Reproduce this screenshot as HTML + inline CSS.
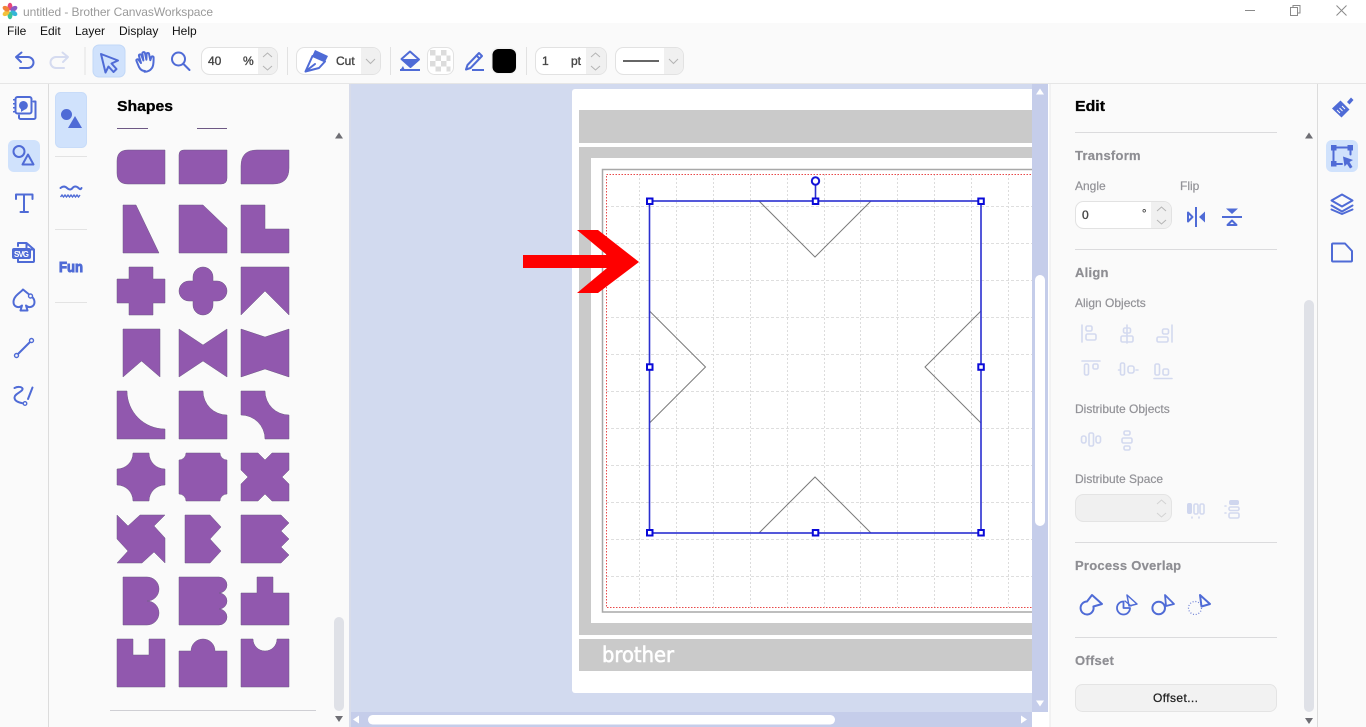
<!DOCTYPE html>
<html><head><meta charset="utf-8"><title>untitled - Brother CanvasWorkspace</title>
<style>
html,body{margin:0;padding:0;width:1366px;height:727px;overflow:hidden;background:#fafafa}
svg{display:block;font-family:"Liberation Sans",sans-serif}
.s path,.s polygon{fill:#9158ae;stroke:#6d5884;stroke-width:.5}
.i{fill:none;stroke:#4f6bd6;stroke-width:2;stroke-linecap:round;stroke-linejoin:round}
.f{fill:#4f6bd6;stroke:none}
.d{fill:none;stroke:#d3d9ef;stroke-width:1.6;stroke-linecap:round;stroke-linejoin:round}
.l{font-size:12px;fill:#929297;stroke:#929297;stroke-width:.2}
.h{font-size:13px;font-weight:bold;fill:#8e8e93;stroke:#8e8e93;stroke-width:.2;letter-spacing:.25px}
.v{font-size:12px;fill:#444;stroke:#444;stroke-width:.35}
.c{fill:none;stroke:#b4b4b4;stroke-width:1}
</style></head><body>
<svg width="1366" height="727" viewBox="0 0 1366 727" xmlns="http://www.w3.org/2000/svg">
<rect width="1366" height="727" fill="#fafafa"/>
<!-- title bar -->
<rect width="1366" height="23" fill="#fff"/>
<g transform="translate(10,11)">
<ellipse cx="0" cy="-4.500" rx="2.400" ry="3.800" fill="#e8467c"/>
<ellipse cx="0" cy="-4.500" rx="2.400" ry="3.800" fill="#8a5cc6" transform="rotate(60)"/>
<ellipse cx="0" cy="-4.500" rx="2.400" ry="3.800" fill="#35b6d8" transform="rotate(120)"/>
<ellipse cx="0" cy="-4.500" rx="2.400" ry="3.800" fill="#3cc39a" transform="rotate(180)"/>
<ellipse cx="0" cy="-4.500" rx="2.400" ry="3.800" fill="#f3c13a" transform="rotate(240)"/>
<ellipse cx="0" cy="-4.500" rx="2.400" ry="3.800" fill="#f2843a" transform="rotate(300)"/>
</g>
<text x="23" y="16" font-size="12" fill="#9a9a9a" textLength="190">untitled - Brother CanvasWorkspace</text>
<path d="M1245 10.500H1255" stroke="#8a8a8a" stroke-width="1"/>
<path d="M1290.500 7.500h7v8h-7zM1293 7.500V5.500h7v7.500h-2" fill="none" stroke="#8a8a8a"/>
<path d="M1336.500 5.500l10 10M1346.500 5.500l-10 10" stroke="#8a8a8a" stroke-width="1"/>
<!-- menu -->
<g font-size="12" fill="#111">
<text x="7" y="35">File</text><text x="40" y="35">Edit</text><text x="75" y="35">Layer</text><text x="119" y="35">Display</text><text x="172" y="35">Help</text>
</g>
<!-- toolbar -->
<rect x="0" y="83" width="1366" height="1" fill="#e6e6e6"/>
<path class="i" d="M21.500 52.500l-5.500 4.500 5 5M16.500 57H28a5.500 5.500 0 0 1 0 11H20" stroke-width="2.100"/>
<path class="i" style="stroke:#d5dbf0" d="M62.500 52.500l5.500 4.500-5 5M67.500 57H56a5.500 5.500 0 0 0 0 11h8" stroke-width="2.100"/>
<rect x="84.500" y="47" width="1" height="28" fill="#e2e2e2"/>
<rect x="93" y="45" width="32" height="32" rx="6" fill="#d0e2fc" stroke="#c2d8f7"/>
<path class="i" d="M101 54l17 6.500-6.500 3 5 5.500-3 3-5-5.500-3 6z" stroke-width="1.800"/>
<g transform="translate(2,2)"><path class="i" stroke-width="1.700" d="M143 69c-3 0-5-2-6-4l-2.500-6c-.6-1.500 1.200-2.500 2.200-1l2.300 3-2-7c-.4-1.600 1.800-2.300 2.400-.8l2 5.300-1-7c-.2-1.700 2.300-1.900 2.600-.3l1.400 6.500.2-5.500c.1-1.600 2.400-1.500 2.500 0l1.200 6 1-3c.5-1.400 2.400-1 2.300.6-.1 3.500.3 7-1.500 10-1.800 2.700-4.600 4-7.600 4z"/></g>
<circle class="i" cx="178.500" cy="59" r="6.500" stroke-width="2"/><path class="i" stroke-width="2.300" d="M183.500 64l6 6"/>
<rect x="201.500" y="47.500" width="76" height="27" rx="8" fill="#fff" stroke="#e2e2e2"/>
<path d="M258 48h12a7 7 0 0 1 7 7v12a7 7 0 0 1-7 7h-12z" fill="#f0f0f0"/>
<text class="v" x="208" y="65">40</text><text class="v" x="243" y="65">%</text>
<path class="c" d="M263 57l4.500-4 4.500 4M263 66l4.500 4 4.500-4"/>
<rect x="287" y="47" width="1" height="28" fill="#e2e2e2"/>
<rect x="296.500" y="47.500" width="84" height="27" rx="8" fill="#fff" stroke="#e2e2e2"/>
<path d="M361 48h12a7 7 0 0 1 7 7v12a7 7 0 0 1-7 7h-12z" fill="#f0f0f0"/>
<path class="f" d="M315 50l13 6-2.500 5-13-5.500z"/>
<path class="i" d="M312.500 56l12.500 5.500-6 6.500-13.500 3.500zM306 71l9-7" stroke-width="1.800"/>
<text class="v" x="336" y="65">Cut</text>
<path class="c" d="M366 59l4.500 4.500 4.500-4.500"/>
<rect x="390" y="47" width="1" height="28" fill="#e2e2e2"/>
<path class="i" d="M410 51.500l9 8-8.500 7.500-9-8z" stroke-width="1.800"/>
<path class="f" d="M402 59h17l-8.500 8z"/>
<path class="f" d="M403 66l-3 4.500h5z"/><rect class="f" x="400" y="69" width="20" height="2"/>
<rect x="427.500" y="47.500" width="26" height="27" rx="7" fill="#fff" stroke="#e2e2e2"/>
<g fill="#dcdcdc">
<rect x="430" y="50" width="5.500" height="5.500"/><rect x="441" y="50" width="5.500" height="5.500"/>
<rect x="435.500" y="55.500" width="5.500" height="5.500"/><rect x="446.500" y="55.500" width="4" height="5.500"/>
<rect x="430" y="61" width="5.500" height="5.500"/><rect x="441" y="61" width="5.500" height="5.500"/>
<rect x="435.500" y="66.500" width="5.500" height="5"/><rect x="446.500" y="66.500" width="4" height="5"/>
</g>
<path class="i" d="M479 53l3 3-11.500 12-4.500 1.500 1.500-4.500z" stroke-width="1.900"/>
<path class="i" d="M476.500 55.500l3 3"/>
<rect class="f" x="472" y="69" width="12" height="2"/>
<rect x="491" y="47.500" width="26" height="26.500" rx="7" fill="#f2f2f2"/>
<rect x="492.500" y="49" width="23.500" height="24" rx="6" fill="#000"/>
<rect x="526" y="47" width="1" height="28" fill="#e2e2e2"/>
<rect x="535.500" y="47.500" width="71" height="27" rx="8" fill="#fff" stroke="#e2e2e2"/>
<path d="M586 48h13a7 7 0 0 1 7 7v12a7 7 0 0 1-7 7h-13z" fill="#f0f0f0"/>
<text class="v" x="542" y="65">1</text><text class="v" x="571" y="65">pt</text>
<path class="c" d="M591 57l4.500-4 4.500 4M591 66l4.500 4 4.500-4"/>
<rect x="615.500" y="47.500" width="68" height="27" rx="8" fill="#fff" stroke="#e2e2e2"/>
<path d="M664 48h12a7 7 0 0 1 7 7v12a7 7 0 0 1-7 7h-12z" fill="#f0f0f0"/>
<rect x="623" y="60" width="36" height="2" fill="#666"/>
<path class="c" d="M669 59l4.500 4.500 4.500-4.500"/>

<!-- left rail -->
<rect x="48" y="84" width="1" height="643" fill="#dcdcdc"/>
<g class="i" stroke-width="1.800">
<rect x="15.500" y="97" width="16" height="16.500" rx="2"/>
<path d="M33.500 101.500h2v16a1.500 1.500 0 0 1-1.500 1.500H20.500a1.500 1.500 0 0 1-1.500-1.500v-2"/>
</g>
<path class="f" d="M23.500 101a4.500 4.500 0 0 1 .8 8.900L21 112v-2.800a4.500 4.500 0 0 1 2.500-8.200z"/>
<path class="f" d="M13 99h3v1.500h-3zM13 103h3v1.500h-3zM13 107h3v1.500h-3zM13 111h3v1.500h-3z"/>
<rect x="8" y="140" width="32" height="32" rx="6" fill="#d0e2fc"/>
<circle class="i" cx="19" cy="151.500" r="5.500" stroke-width="2.200"/>
<path class="i" d="M28 154.500l5.500 10h-11z" stroke-width="2.400"/>
<path class="i" stroke-width="2" d="M16 199v-4.500h16.500v4.500M24 194.500v17M20.500 212h7.500"/>
<path class="i" stroke-width="1.800" d="M18 246v-3h8.500l7.500 6.500V261a1 1 0 0 1-1 1H18v-2.500M26.500 243.500v6H34"/>
<rect class="f" x="12" y="248" width="19" height="11" rx="2"/>
<text x="14" y="257" font-size="8" font-weight="bold" fill="#fff" textLength="15">SVG</text>
<path class="i" stroke-width="1.900" d="M23 289.500C20 293 13.500 296 13.500 302C13.500 307 19 308.500 22 305.500L20.500 310.500H27.500L26 305.500C29 308.500 34.500 307 34.500 302C34.500 299.500 33 297.500 31 296L23 289.500"/>
<circle cx="30.500" cy="296" r="2" fill="#fafafa" stroke="#4f6bd6" stroke-width="1.400"/>
<path class="i" stroke-width="1.800" d="M18 354l12-12"/>
<circle cx="16.500" cy="355.500" r="2" fill="#fafafa" stroke="#4f6bd6" stroke-width="1.400"/>
<circle cx="31.500" cy="340.500" r="2" fill="#fafafa" stroke="#4f6bd6" stroke-width="1.400"/>
<path class="i" stroke-width="2" d="M14.500 388c3-1.500 7-1.500 8 .5 1 3-8 5-8 9 0 4 5 5 9 6"/>
<path class="i" stroke-width="3" d="M32.500 387.500L28 399"/>
<circle cx="25" cy="403.500" r="1.800" fill="#fafafa" stroke="#4f6bd6" stroke-width="1.300"/>

<!-- sub rail -->
<rect x="55.500" y="92.500" width="31" height="55" rx="5" fill="#d0e2fc" stroke="#c8dcf9"/>
<circle class="f" cx="66.500" cy="114.500" r="5.500"/><path class="f" d="M75 116l7 12h-14z"/>
<g fill="#e3e3e3"><rect x="55" y="156" width="32" height="1"/><rect x="55" y="229" width="32" height="1"/><rect x="55" y="302" width="32" height="1"/></g>
<path class="i" stroke-width="1.700" d="M60.500 188c2.500-2 4.500-2 6.500 0s4 2 5.500 0 4-2 6 0 2.500 1 3 0"/>
<path d="M60.500 197l1.500-2 1.500 2 1.500-2 1.500 2 1.500-2 1.500 2 1.500-2 1.500 2 1.500-2 1.500 2 1.500-2 1.500 2 1.500-2" fill="none" stroke="#4f6bd6" stroke-width="1.400"/>
<text x="59" y="272" font-size="15" font-weight="bold" fill="#4f6bd6" stroke="#4f6bd6" stroke-width="1" textLength="24" lengthAdjust="spacingAndGlyphs">Fun</text>

<!-- shapes panel -->
<rect x="349" y="84" width="2" height="643" fill="#d8dcea"/>
<text x="117" y="111" font-size="15" font-weight="bold" fill="#000" stroke="#000" stroke-width=".3" textLength="56" lengthAdjust="spacingAndGlyphs">Shapes</text>
<rect x="117" y="128" width="31" height="1" fill="#6d5884"/><rect x="197" y="128" width="30" height="1" fill="#6d5884"/>
<g class="s">
<g transform="translate(117,150)"><path d="M11 0H48V34H11Q0 34 0 23V11Q0 0 11 0Z"/></g>
<g transform="translate(179,150)"><path d="M5 0H48V28Q48 34 42 34H0V5Q0 0 5 0Z"/></g>
<g transform="translate(241,150)"><path d="M16 0H48V18Q48 34 32 34H0V16Q0 0 16 0Z"/></g>
<g transform="translate(117,205)"><polygon points="6,0 19,0 42,48 6,48"/></g>
<g transform="translate(179,205)"><polygon points="0,0 24,0 48,23 48,48 0,48"/></g>
<g transform="translate(241,205)"><polygon points="0,0 24,0 24,24 48,24 48,48 0,48"/></g>
<g transform="translate(117,267)"><polygon points="12,0 36,0 36,12 48,12 48,36 36,36 36,48 12,48 12,36 0,36 0,12 12,12"/></g>
<g transform="translate(179,267)"><path d="M14 14V10A10 10 0 0 1 34 10V14H38A10 10 0 0 1 38 34H34V38A10 10 0 0 1 14 38V34H10A10 10 0 0 1 10 14Z"/></g>
<g transform="translate(241,267)"><polygon points="0,0 48,0 48,48 24,24 0,48"/></g>
<g transform="translate(117,329)"><polygon points="6,0 43,0 43,48 24.500,32 6,48"/></g>
<g transform="translate(179,329)"><polygon points="0,0 24,16 48,0 48,48 24,32 0,48"/></g>
<g transform="translate(241,329)"><polygon points="0,0 24,8 48,0 48,48 24,40 0,48"/></g>
<g transform="translate(117,391)"><path d="M0 0H10A38 38 0 0 0 48 38V48H0Z"/></g>
<g transform="translate(179,391)"><path d="M0 0H24A24 24 0 0 0 48 24V48H0Z"/></g>
<g transform="translate(241,391)"><path d="M0 0H24A24 24 0 0 0 48 24V48H24A24 24 0 0 0 0 24Z"/></g>
<g transform="translate(117,453)"><path d="M16 0H32A16 16 0 0 0 48 16V32A16 16 0 0 0 32 48H16A16 16 0 0 0 0 32V16A16 16 0 0 0 16 0Z"/></g>
<g transform="translate(179,453)"><path d="M7 0H41A7 7 0 0 0 48 7V41A7 7 0 0 0 41 48H7A7 7 0 0 0 0 41V7A7 7 0 0 0 7 0Z"/></g>
<g transform="translate(241,453)"><polygon points="0,0 17,0 24,7 31,0 48,0 48,17 41,24 48,31 48,48 31,48 24,41 17,48 0,48 0,31 7,24 0,17"/></g>
<g transform="translate(117,515)"><polygon points="0,0 11,11 23,0 48,0 37,11 48,23 48,48 37,37 25,48 0,48 11,36 0,24"/></g>
<g transform="translate(179,515)"><polygon points="6,0 31,0 42,12 31,24 42,36 31,48 6,48"/></g>
<g transform="translate(241,515)"><polygon points="0,0 40,0 48,8 40,16 48,24 40,32 48,40 40,48 0,48"/></g>
<g transform="translate(117,577)"><path d="M6 0H30A12 12 0 0 1 30 24A12 12 0 0 1 30 48H6Z"/></g>
<g transform="translate(179,577)"><path d="M0 0H40A8 8 0 0 1 40 16A8 8 0 0 1 40 32A8 8 0 0 1 40 48H0Z"/></g>
<g transform="translate(241,577)"><polygon points="16,0 32,0 32,16 48,16 48,48 0,48 0,16 16,16"/></g>
<g transform="translate(117,639)"><polygon points="0,0 16,0 16,16 32,16 32,0 48,0 48,48 0,48"/></g>
<g transform="translate(179,639)"><path d="M0 12H12A12 12 0 0 1 36 12H48V48H0Z"/></g>
<g transform="translate(241,639)"><path d="M0 0H12A12 12 0 0 0 36 0H48V48H0Z"/></g>
</g>
<rect x="110" y="710" width="206" height="1" fill="#cfcfd4"/>
<path d="M339 132.500l4 6h-8z" fill="#6e6e74"/><path d="M339 722l4-6h-8z" fill="#6e6e74"/>
<rect x="334" y="617" width="10" height="94" rx="5" fill="#dfe1e7"/>

<!-- canvas -->
<rect x="351" y="84" width="697" height="643" fill="#d2daef"/>
<rect x="572" y="89" width="478" height="604" rx="3" fill="#fff"/>
<g fill="#cacaca">
<rect x="579" y="110" width="460" height="33"/>
<rect x="579" y="147" width="460" height="488"/>
<rect x="579" y="639" width="460" height="32"/>
</g>
<rect x="591" y="158" width="450" height="465" fill="#fff"/>
<path d="M1040 169.500H602.500V612H1040" fill="#fff" stroke="#a8a8a8" stroke-width="1.500"/>
<g fill="none" stroke="#dedede" stroke-width="1" stroke-dasharray="3 2">
<path d="M606 206.500H1032M606 243.500H1032M606 280.500H1032M606 317.500H1032M606 354.500H1032M606 391.500H1032M606 428.500H1032M606 465.500H1032M606 502.500H1032M606 539.500H1032M606 576.500H1032"/>
</g>
<g fill="none" stroke="#dcdcdc" stroke-width="1" stroke-dasharray="2 2">
<path d="M639.500 174V607M676.500 174V607M713.500 174V607M750.500 174V607M787.500 174V607M824.500 174V607M860.500 174V607M897.500 174V607M934.500 174V607M971.500 174V607M1008.500 174V607"/>
</g>
<path d="M1040 174.500H606.500V607.500H1040" fill="none" stroke="#e84a4a" stroke-width="1" stroke-dasharray="1.500 1.500"/>
<text x="602" y="662" font-size="21" font-family="DejaVu Sans" fill="#fff" stroke="#fff" stroke-width=".6" textLength="72" lengthAdjust="spacingAndGlyphs">brother</text>
<!-- shape lines -->
<path d="M759 201L815 257L871 201M649.500 311L705.500 367L649.500 423M981 311L925 367L981 423M759 533L815 477L871 533" fill="none" stroke="#7a7a7a" stroke-width="1"/>
<!-- selection -->
<rect x="649.500" y="201" width="331.500" height="332" fill="none" stroke="#2a2fd0" stroke-width="1.600"/>
<path d="M815.500 185V199" stroke="#2a2fd0" stroke-width="1.600"/>
<circle cx="815.500" cy="181" r="3.700" fill="#fff" stroke="#1414d8" stroke-width="2"/>
<g fill="#fff" stroke="#0a0ad8" stroke-width="2">
<rect x="647" y="198.500" width="5.500" height="5.500"/><rect x="812.800" y="198.500" width="5.500" height="5.500"/><rect x="978.300" y="198.500" width="5.500" height="5.500"/>
<rect x="647" y="364.300" width="5.500" height="5.500"/><rect x="978.300" y="364.300" width="5.500" height="5.500"/>
<rect x="647" y="530" width="5.500" height="5.500"/><rect x="812.800" y="530" width="5.500" height="5.500"/><rect x="978.300" y="530" width="5.500" height="5.500"/>
</g>
<polygon points="523,255 607,255 577,230 598,230 639,262 598,293 577,293 607,268 523,268" fill="#fe0000"/>
<!-- canvas scrollbars -->
<rect x="1032" y="84" width="16" height="628" fill="#c5cdea"/>
<rect x="1035" y="275" width="10" height="251" rx="5" fill="#fff"/>
<path d="M1040 88.500l4 6h-8z" fill="#fff"/><path d="M1040 706.500l4-6h-8z" fill="#fff"/>
<rect x="351" y="712" width="681" height="15" fill="#c5cdea"/>
<rect x="368" y="715" width="467" height="9.500" rx="4.700" fill="#fff"/>
<path d="M1027 719.500l-6-4v8z" fill="#fff"/><path d="M353 719.500l6-4v8z" fill="#fff"/>
<rect x="1032" y="712" width="18" height="15" fill="#fff"/>
<rect x="1048" y="84" width="2" height="628" fill="#fff"/>

<!-- right panel -->
<rect x="1050" y="84" width="267" height="643" fill="#fafafa"/>
<rect x="1049.500" y="84" width="1" height="643" fill="#e8e8ea"/>
<rect x="1317" y="84" width="1" height="643" fill="#dcdcdc"/>
<text x="1075" y="111" font-size="15" font-weight="bold" fill="#000" stroke="#000" stroke-width=".3" textLength="30" lengthAdjust="spacingAndGlyphs">Edit</text>
<g fill="#dbdbdd">
<rect x="1075" y="132" width="202" height="1"/><rect x="1075" y="249" width="202" height="1"/><rect x="1075" y="542" width="202" height="1"/><rect x="1075" y="637" width="202" height="1"/>
</g>
<path d="M1309 132.500l4 6h-8z" fill="#6e6e74"/><path d="M1309 724l4-6h-8z" fill="#6e6e74"/>
<rect x="1304" y="300" width="10" height="412" rx="5" fill="#dfe1e7"/>
<text class="h" x="1075" y="160">Transform</text>
<text class="l" x="1075" y="190">Angle</text><text class="l" x="1180" y="190">Flip</text>
<rect x="1075.500" y="201.500" width="96" height="27" rx="8" fill="#fff" stroke="#e2e2e2"/>
<path d="M1151 202h13a7 7 0 0 1 7 7v12a7 7 0 0 1-7 7h-13z" fill="#f0f0f0"/>
<text class="v" x="1082" y="219">0</text><text x="1142" y="217" font-size="11" font-weight="bold" fill="#444">°</text>
<path class="c" d="M1157 211l4.500-4 4.500 4M1157 220l4.500 4 4.500-4"/>
<!-- flip -->
<rect class="f" x="1195" y="207" width="2" height="20"/>
<path class="i" stroke-width="1.800" d="M1188 212.500v9l4.500-4.500z"/><path class="f" d="M1205 211.500v11l-6-5.500z"/>
<rect class="f" x="1222" y="216" width="20" height="2"/>
<path class="f" d="M1226 208.500h12l-6 5.500z"/><path class="i" stroke-width="1.800" d="M1227.500 225h9l-4.500-4.500z"/>
<text class="h" x="1075" y="277">Align</text>
<text class="l" x="1075" y="307">Align Objects</text>
<g class="d">
<path d="M1082 325v17"/><rect x="1086" y="326" width="6" height="5" rx="1.500"/><rect x="1086" y="334" width="10" height="6" rx="1.500"/>
<path d="M1127 325v18"/><rect x="1123.500" y="328" width="7" height="5" rx="1.500"/><rect x="1121" y="336" width="12" height="6" rx="1.500"/>
<path d="M1172 325v17"/><rect x="1162.500" y="329" width="6" height="5" rx="1.500"/><rect x="1157" y="337" width="11" height="5" rx="1.500"/>
<path d="M1082 361h18"/><rect x="1084.500" y="364" width="4" height="11" rx="1.500"/><rect x="1093" y="364" width="5" height="5" rx="1.500"/>
<path d="M1118.500 370h2M1136 370h2"/><rect x="1120.500" y="363" width="4" height="12" rx="1.500"/><rect x="1128" y="366" width="6" height="7" rx="2"/>
<path d="M1154 378.500h18"/><rect x="1155" y="364" width="4.500" height="11" rx="1.500"/><rect x="1163" y="369" width="5.500" height="6" rx="1.500"/>
</g>
<text class="l" x="1075" y="413">Distribute Objects</text>
<g class="d">
<rect x="1081.500" y="436" width="4.500" height="7" rx="2"/><rect x="1089" y="433" width="4.500" height="13" rx="1.500"/><rect x="1096" y="436" width="4.500" height="7" rx="2"/>
<rect x="1124" y="431" width="6" height="4" rx="1.500"/><rect x="1122" y="438" width="10" height="5" rx="1.500"/><rect x="1124" y="446" width="6" height="4" rx="1.500"/>
</g>
<text class="l" x="1075" y="483">Distribute Space</text>
<rect x="1075.500" y="494.500" width="96" height="27" rx="8" fill="#f0f0f0" stroke="#e4e4e4"/>
<path d="M1157 504l4.500-4 4.500 4M1157 513l4.500 4 4.500-4" fill="none" stroke="#d2d2d2"/>
<g class="d">
<rect x="1194" y="504" width="4" height="10" rx="1.500"/><rect x="1200" y="504" width="4" height="10" rx="1.500"/>
<path d="M1192 517v1M1199 517v1"/>
<rect x="1229" y="507" width="10" height="3.500" rx="1.500"/><rect x="1229" y="513" width="10" height="5" rx="1.500"/>
<path d="M1225 506h1M1225 513h1"/>
</g>
<rect x="1187" y="503" width="5" height="11" rx="2" fill="#cfd6ee"/><rect x="1229" y="500" width="10" height="5" rx="2" fill="#cfd6ee"/>
<text class="h" x="1075" y="570">Process Overlap</text>
<g class="i" stroke-width="2">
<path d="M1092 595L1102 604L1093.400 606.500A6.500 6.500 0 1 1 1087 601.500Z"/>
<path d="M1123.500 601.500A6.500 6.500 0 1 0 1130 608L1123.500 608Z" stroke-width="1.800"/>
<path d="M1127 595L1137 604L1129 606Z" stroke-width="1.500"/><path d="M1125 601L1131 606" stroke-width="1.300"/>
<circle cx="1158.700" cy="608" r="6.300"/>
<path d="M1165 595L1174 604L1166 606Z" stroke-width="1.800"/>
<path d="M1200 595L1210 604L1201.500 606.500Z"/>
</g>
<circle cx="1195" cy="608" r="6.500" fill="none" stroke="#6c7fd6" stroke-width="1.200" stroke-dasharray="1 1.800"/>
<text class="h" x="1075" y="665">Offset</text>
<rect x="1075.500" y="684.500" width="201" height="27" rx="7" fill="#f2f2f2" stroke="#e4e4e4"/>
<text x="1153" y="702" font-size="12" fill="#222" stroke="#222" stroke-width=".25" textLength="45" lengthAdjust="spacing">Offset...</text>

<!-- right rail -->
<path class="f" d="M1347 102L1351 97.500L1353.500 100L1349.500 104.500Z"/>
<path class="f" d="M1340.500 100.500L1349.500 109.500L1341.500 117.500L1332 108.500Z"/>
<path d="M1337 110l3 3M1339.500 108l3 3M1342 106l3 3" stroke="#fafafa" stroke-width="1" fill="none"/>
<rect x="1326" y="140" width="32" height="32" rx="6" fill="#d0e2fc"/>
<path class="i" d="M1334 147.500h16M1333.500 149v14.500M1335 164h7M1350.500 148.500v6" stroke-width="2.200"/>
<g class="f"><rect x="1331" y="145" width="5.500" height="5.500"/><rect x="1347.500" y="145" width="5.500" height="5.500"/><rect x="1331" y="161" width="5.500" height="5.500"/></g>
<path class="f" d="M1343 156.500l10 3.500-3.500 2 3 5-2.500 1.500-3-4.500-2.500 2.500z"/>
<g class="i" stroke-width="1.900">
<path d="M1342 194.500l10.500 6-10.500 6-10.500-6z"/>
<path d="M1331.500 205.500l10.500 6 10.500-6M1331.500 209.500l10.500 4.500 10.500-4.500"/>
</g>
<path class="i" stroke-width="2.200" d="M1334 243.500h11l7 7.500v9.500a1 1 0 0 1-1 1h-18a1 1 0 0 1-1-1v-16a1 1 0 0 1 1-1z"/>
</svg>
</body></html>
